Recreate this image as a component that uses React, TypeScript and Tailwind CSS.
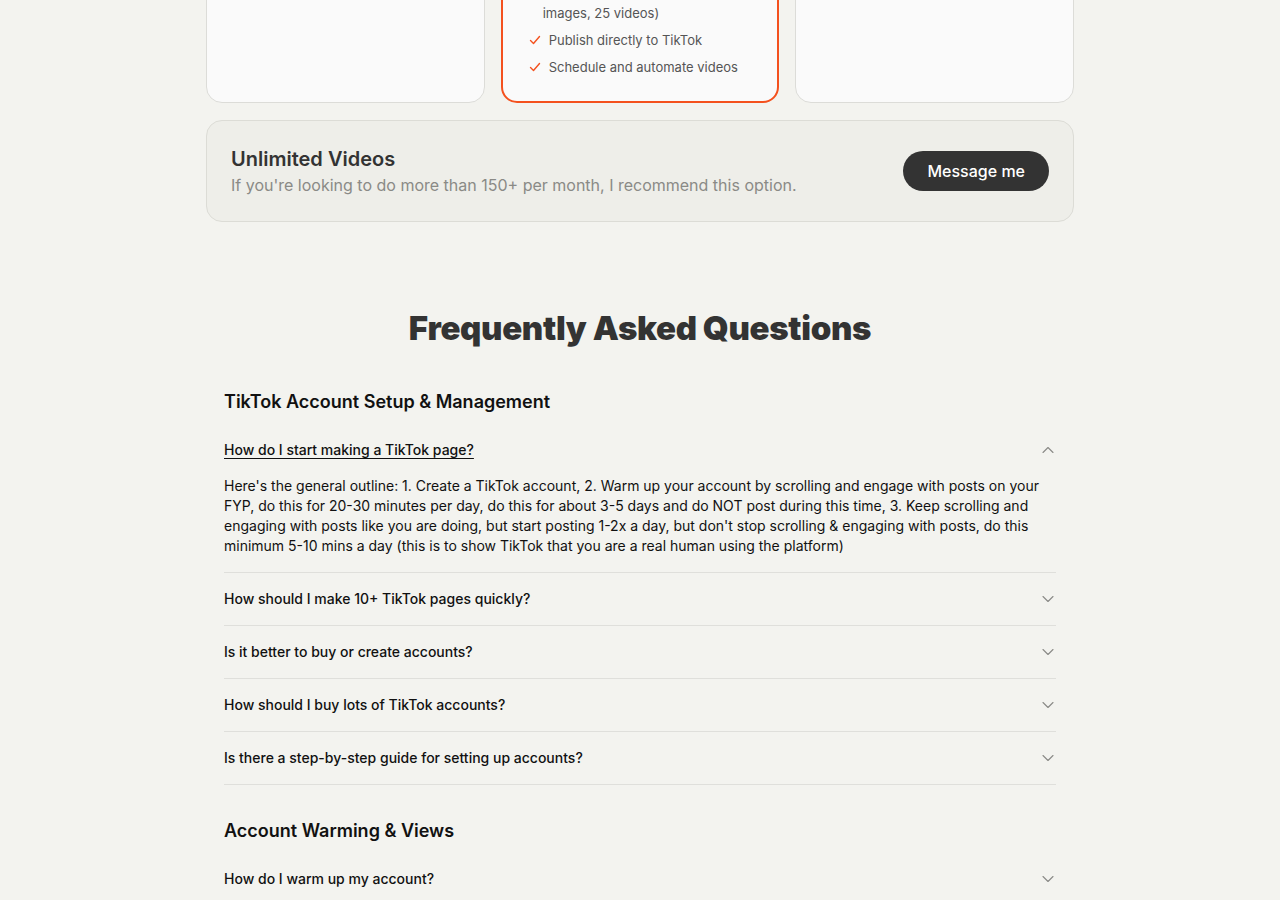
import { useState } from "react";

const sections = [
  {
    title: "TikTok Account Setup & Management",
    items: [
      {
        q: "How do I start making a TikTok page?",
        a: "Here's the general outline: 1. Create a TikTok account, 2. Warm up your account by scrolling and engage with posts on your FYP, do this for 20-30 minutes per day, do this for about 3-5 days and do NOT post during this time, 3. Keep scrolling and engaging with posts like you are doing, but start posting 1-2x a day, but don't stop scrolling & engaging with posts, do this minimum 5-10 mins a day (this is to show TikTok that you are a real human using the platform)",
      },
      { q: "How should I make 10+ TikTok pages quickly?", a: "" },
      { q: "Is it better to buy or create accounts?", a: "" },
      { q: "How should I buy lots of TikTok accounts?", a: "" },
      { q: "Is there a step-by-step guide for setting up accounts?", a: "" },
    ],
  },
  {
    title: "Account Warming & Views",
    items: [
      { q: "How do I warm up my account?", a: "" },
      { q: "Why are my videos getting 0 views?", a: "" },
      { q: "How long until my videos get views?", a: "" },
    ],
  },
];

function Check() {
  return (
    <svg width="12" height="12" viewBox="0 0 12 12" fill="none" className="mt-[4px] shrink-0">
      <path d="M1.5 6.5 4.5 9.5 10.5 2.5" stroke="#f4511e" strokeWidth="1.4" strokeLinecap="round" strokeLinejoin="round" />
    </svg>
  );
}

function Chevron({ up }: { up: boolean }) {
  return (
    <svg width="12" height="8" viewBox="0 0 12 8" fill="none" className="mr-[2px] shrink-0">
      <path
        d={up ? "M1 6.5 6 1.5 11 6.5" : "M1 1.5 6 6.5 11 1.5"}
        stroke="#8a8a86"
        strokeWidth="1.1"
        strokeLinecap="round"
        strokeLinejoin="round"
      />
    </svg>
  );
}

export default function App() {
  const [open, setOpen] = useState<string | null>("How do I start making a TikTok page?");

  return (
    <div className="min-h-screen bg-[#f3f3ef] text-[#111] [font-family:Inter,'Noto_Sans',sans-serif] overflow-hidden">
      <div className="mx-auto w-[868px]">
        {/* pricing cards, scrolled past */}
        <div className="-mt-[120px] grid grid-cols-3 gap-4">
          <div className="h-[223px] rounded-[16px] border border-[#dcdcd8] bg-[#fafafa]" />
          <div className="flex h-[223px] flex-col justify-end rounded-[16px] border-2 border-[#f4511e] bg-[#fafafa] pl-[26px] pr-4 pb-[24px]">
            <ul className="space-y-[7px] text-[13px] leading-5 text-[#555]">
              <li className="flex gap-2">
                <Check />
                <span>Up to 50 slideshows (25</span>
              </li>
              <li className="pl-[14px]">images, 25 videos)</li>
              <li className="flex gap-2">
                <Check />
                <span>Publish directly to TikTok</span>
              </li>
              <li className="flex gap-2">
                <Check />
                <span>Schedule and automate videos</span>
              </li>
            </ul>
          </div>
          <div className="h-[223px] rounded-[16px] border border-[#dcdcd8] bg-[#fafafa]" />
        </div>

        <div className="mt-[17px] flex items-center justify-between rounded-[16px] border border-[#dcdcd6] bg-[#eeeee9] px-6 py-6">
          <div>
            <h3 className="text-[20px] font-semibold leading-7 text-[#333]">Unlimited Videos</h3>
            <p className="text-[16px] leading-6 text-[#8a8a86]">
              If you're looking to do more than 150+ per month, I recommend this option.
            </p>
          </div>
          <button className="h-10 rounded-full bg-[#333] px-6 text-[16px] font-medium text-white">Message me</button>
        </div>
      </div>

      <div className="mx-auto mt-[86px] w-[832px] pb-20">
        <h2 className="text-center text-[33px] font-black leading-10 tracking-[-0.01em] text-[#333]">
          Frequently Asked Questions
        </h2>

        <div className="mt-[40px] space-y-8">
          {sections.map((s) => (
            <div key={s.title}>
              <h3 className="mb-2 text-[18px] font-semibold leading-7 text-[#111]">{s.title}</h3>
              <div>
                {s.items.map((it) => {
                  const isOpen = open === it.q;
                  return (
                    <div key={it.q} className="border-b border-[#dfdfdb]">
                      <button
                        onClick={() => setOpen(isOpen ? null : it.q)}
                        className="flex w-full items-center justify-between py-4 text-left text-[14px] font-medium leading-5 text-[#111]"
                      >
                        <span className={isOpen ? "underline underline-offset-[3px]" : ""}>{it.q}</span>
                        <Chevron up={isOpen} />
                      </button>
                      {isOpen && (
                        <div className="pb-4 pr-4 text-[14px] leading-5 text-[#111]">{it.a}</div>
                      )}
                    </div>
                  );
                })}
              </div>
            </div>
          ))}
        </div>
      </div>
    </div>
  );
}
